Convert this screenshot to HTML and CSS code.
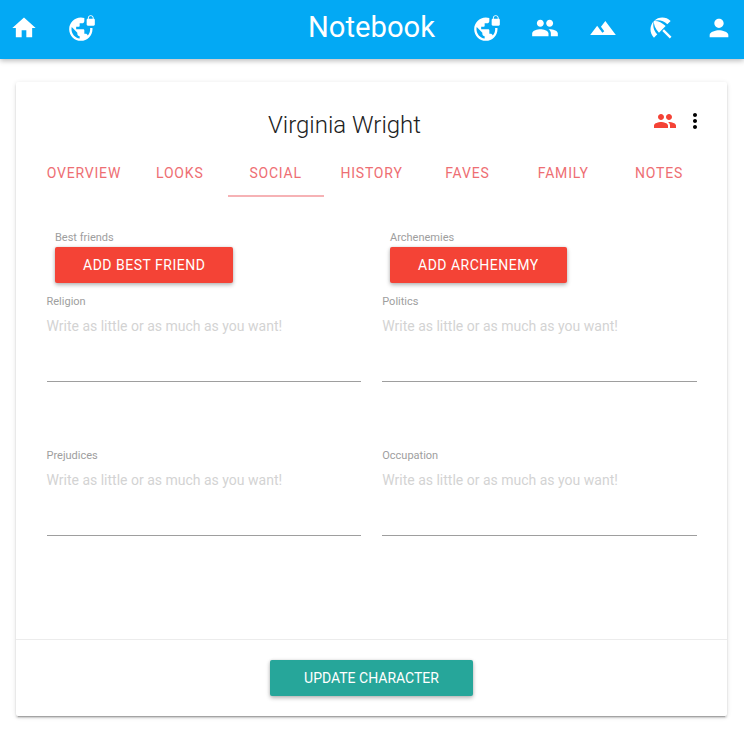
FILE: index.html
```html
<!DOCTYPE html>
<html lang="en">
<head>
    <meta charset="UTF-8">
    <meta name="viewport" content="width=device-width, initial-scale=1.0">
    <title>Notebook</title>
    <link rel="stylesheet" href="styles.css">
</head>
<body>
    <svg class="icon-defs" width="0" height="0">
        <symbol id="i-home" viewBox="0 0 24 24"><path d="M10 20v-6h4v6h5v-8h3L12 3 2 12h3v8z"/></symbol>
        <symbol id="i-vpn" viewBox="0 0 24 24"><path d="M22 4v-.5C22 2.12 20.88 1 19.5 1S17 2.12 17 3.5V4c-.55 0-1 .45-1 1v4c0 .55.45 1 1 1h5c.55 0 1-.45 1-1V5c0-.55-.45-1-1-1zm-.8 0h-3.4v-.5c0-.94.76-1.7 1.7-1.7s1.7.76 1.7 1.7V4zm-2.28 8c.04.33.08.66.08 1 0 2.08-.8 3.97-2.1 5.39-.26-.81-1-1.39-1.9-1.39h-1v-3c0-.55-.45-1-1-1H7v-2h2c.55 0 1-.45 1-1V8h2c1.1 0 2-.9 2-2V3.46c-.95-.3-1.95-.46-3-.46C5.48 3 1 7.48 1 13s4.48 10 10 10 10-4.48 10-10c0-.34-.02-.67-.05-1h-2.03zM10 20.93c-3.95-.49-7-3.85-7-7.93 0-.62.08-1.21.21-1.79L8 16v1c0 1.1.9 2 2 2v1.93z"/></symbol>
        <symbol id="i-group" viewBox="0 0 24 24"><path d="M16 11c1.66 0 2.99-1.34 2.99-3S17.66 5 16 5c-1.66 0-3 1.34-3 3s1.34 3 3 3zm-8 0c1.66 0 2.99-1.34 2.99-3S9.66 5 8 5C6.34 5 5 6.34 5 8s1.34 3 3 3zm0 2c-2.33 0-7 1.17-7 3.5V19h14v-2.5c0-2.33-4.67-3.5-7-3.5zm8 0c-.29 0-.62.02-.97.05 1.16.84 1.97 1.97 1.97 3.45V19h6v-2.5c0-2.33-4.67-3.5-7-3.5z"/></symbol>
        <symbol id="i-terrain" viewBox="0 0 24 24"><path d="M14 6l-3.75 5 2.85 3.8-1.6 1.2C9.81 13.75 7 10 7 10l-6 8h22L14 6z"/></symbol>
        <symbol id="i-beach" viewBox="0 0 24 24"><path d="M13.127 14.56l1.43-1.43 6.44 6.443L19.57 21zm4.293-5.73l2.86-2.86c-3.95-3.95-10.35-3.96-14.3-.02 3.93-1.3 8.31-.25 11.44 2.88zM5.95 5.98c-3.94 3.95-3.93 10.35.02 14.3l2.86-2.86C5.7 14.29 4.65 9.91 5.95 5.98zm.02-.02l-.01.01c-.38 3.01 1.17 6.88 4.3 10.02l5.73-5.73c-3.13-3.13-7.01-4.68-10.02-4.3z"/></symbol>
        <symbol id="i-person" viewBox="0 0 24 24"><path d="M12 12c2.21 0 4-1.79 4-4s-1.79-4-4-4-4 1.79-4 4 1.79 4 4 4zm0 2c-2.67 0-8 1.34-8 4v2h16v-2c0-2.66-5.33-4-8-4z"/></symbol>
        <symbol id="i-more" viewBox="0 0 24 24"><path d="M12 8c1.1 0 2-.9 2-2s-.9-2-2-2-2 .9-2 2 .9 2 2 2zm0 2c-1.1 0-2 .9-2 2s.9 2 2 2 2-.9 2-2-.9-2-2-2zm0 6c-1.1 0-2 .9-2 2s.9 2 2 2 2-.9 2-2-.9-2-2-2z"/></symbol>
    </svg>

    <nav class="topbar">
        <div class="nav-group">
            <a class="nav-icon" href="#"><svg><use href="#i-home"/></svg></a>
            <a class="nav-icon" href="#"><svg><use href="#i-vpn"/></svg></a>
        </div>
        <a class="brand" href="#">Notebook</a>
        <div class="nav-group nav-right">
            <a class="nav-icon" href="#"><svg><use href="#i-vpn"/></svg></a>
            <a class="nav-icon" href="#"><svg><use href="#i-group"/></svg></a>
            <a class="nav-icon" href="#"><svg><use href="#i-terrain"/></svg></a>
            <a class="nav-icon" href="#"><svg><use href="#i-beach"/></svg></a>
            <a class="nav-icon" href="#"><svg><use href="#i-person"/></svg></a>
        </div>
    </nav>

    <main class="card">
        <div class="card-content">
            <header class="card-head">
                <h1 class="card-title">Virginia Wright</h1>
                <div class="card-tools">
                    <svg class="tool-group"><use href="#i-group"/></svg>
                    <svg class="tool-more"><use href="#i-more"/></svg>
                </div>
            </header>

            <ul class="tabs">
                <li class="tab">Overview</li>
                <li class="tab">Looks</li>
                <li class="tab active">Social</li>
                <li class="tab">History</li>
                <li class="tab">Faves</li>
                <li class="tab">Family</li>
                <li class="tab">Notes</li>
            </ul>

            <div class="link-row">
                <div class="link-field">
                    <label class="field-label">Best friends</label>
                    <button class="btn btn-red">Add best friend</button>
                </div>
                <div class="link-field">
                    <label class="field-label">Archenemies</label>
                    <button class="btn btn-red">Add archenemy</button>
                </div>
            </div>

            <div class="text-fields">
                <div class="text-field">
                    <label class="field-label">Religion</label>
                    <div class="placeholder">Write as little or as much as you want!</div>
                </div>
                <div class="text-field">
                    <label class="field-label">Politics</label>
                    <div class="placeholder">Write as little or as much as you want!</div>
                </div>
                <div class="text-field">
                    <label class="field-label">Prejudices</label>
                    <div class="placeholder">Write as little or as much as you want!</div>
                </div>
                <div class="text-field">
                    <label class="field-label">Occupation</label>
                    <div class="placeholder">Write as little or as much as you want!</div>
                </div>
            </div>
        </div>

        <footer class="card-action">
            <button class="btn btn-teal">Update character</button>
        </footer>
    </main>
</body>
</html>
```

FILE: styles.css
```css
* {
    box-sizing: border-box;
}
body {
    margin: 0;
    background: #fff;
    font-family: Roboto, "Liberation Sans", sans-serif;
    color: #212121;
}
.icon-defs {
    position: absolute;
}
.topbar {
    display: grid;
    grid-template-columns: 1fr auto 1fr;
    align-items: center;
    height: 59px;
    padding: 0 11px 4px 10px;
    background-color: #03a9f4;
    box-shadow: 0 2px 5px rgba(0, 0, 0, 0.26);
}
.nav-group {
    display: flex;
    gap: 30px;
}
.nav-right {
    justify-content: flex-end;
}
.nav-icon {
    display: block;
    width: 28px;
    height: 28px;
    color: #fff;
}
.nav-icon svg {
    display: block;
    width: 28px;
    height: 28px;
    fill: currentColor;
}
.brand {
    margin-bottom: 2px;
    font-size: 29.2px;
    font-weight: 400;
    color: #fff;
    text-decoration: none;
}
.card {
    margin: 23px 17px 29px 16px;
    height: 634px;
    display: flex;
    flex-direction: column;
    background: #fff;
    border-radius: 2px;
    box-shadow: 0 2px 2px 0 rgba(0, 0, 0, 0.14), 0 1px 5px 0 rgba(0, 0, 0, 0.12), 0 3px 1px -2px rgba(0, 0, 0, 0.2);
}
.card-content {
    flex: 1;
    padding: 25px 20px 0;
}
.card-head {
    display: flex;
    justify-content: space-between;
    height: 42px;
}
.card-title {
    flex: 1;
    margin: 0;
    text-align: center;
    font-size: 24px;
    font-weight: 300;
    line-height: 36px;
}
.card-tools {
    display: flex;
    gap: 6px;
    height: 24px;
    margin-top: 2px;
}
.tool-group {
    width: 24px;
    height: 24px;
    fill: #f44336;
}
.tool-more {
    width: 24px;
    height: 24px;
    fill: #000;
}
.tabs {
    display: flex;
    height: 48px;
    margin: 0;
    padding: 0;
    list-style: none;
}
.tab {
    width: 96px;
    height: 48px;
    line-height: 48px;
    text-align: center;
    font-size: 14px;
    letter-spacing: 0.8px;
    text-transform: uppercase;
    color: #ee6e73;
}
.tab.active {
    border-bottom: 2px solid #f6b2b5;
}
.field-label {
    display: block;
    font-size: 11px;
    line-height: 14px;
    color: #9e9e9e;
}
.link-row {
    display: grid;
    grid-template-columns: 1fr 1fr;
    column-gap: 16px;
    margin-top: 34px;
    padding: 0 10px 0 19px;
}
.link-field:last-child {
    padding-left: 6px;
}
.btn {
    display: block;
    height: 36px;
    border: none;
    border-radius: 2px;
    color: #fff;
    font-family: inherit;
    font-size: 14px;
    letter-spacing: 0.5px;
    text-transform: uppercase;
    box-shadow: 0 2px 4px rgba(0, 0, 0, 0.28), 0 0 3px rgba(0, 0, 0, 0.1);
}
.btn-red {
    padding: 0 28px;
    margin-top: 2px;
    background-color: #f44336;
}
.btn-teal {
    width: 203px;
    background-color: #26a69a;
    letter-spacing: 0;
}
.text-fields {
    display: grid;
    grid-template-columns: 1fr 1fr;
    column-gap: 21px;
    row-gap: 67px;
    margin-top: 12px;
    padding-left: 10.5px;
    padding-right: 10px;
}
.text-field {
    height: 87px;
    border-bottom: 1px solid #9e9e9e;
}
.placeholder {
    margin-top: 6px;
    font-size: 14px;
    line-height: 22px;
    color: #9e9e9e;
    opacity: 0.45;
}
.card-action {
    display: flex;
    justify-content: center;
    align-items: flex-start;
    height: 77px;
    padding-top: 20px;
    border-top: 1px solid rgba(160, 160, 160, 0.2);
}
```
